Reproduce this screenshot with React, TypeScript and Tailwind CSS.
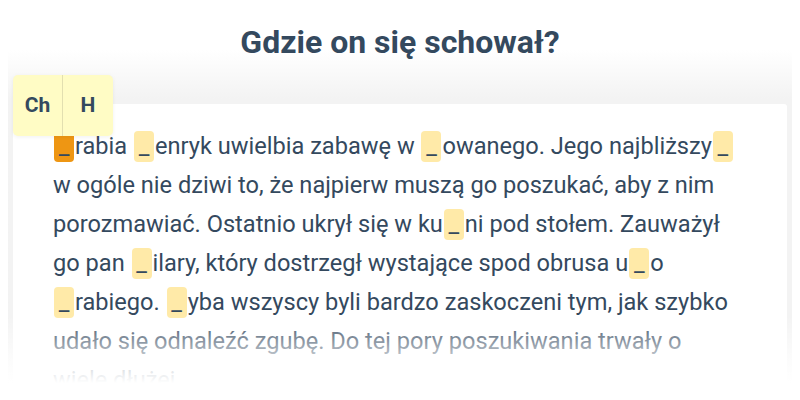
function Blank({ active = false }: { active?: boolean }) {
  return (
    <span
      className={`mx-px inline-block h-[31px] w-[20px] rounded-[4px] text-center leading-[31px] ${
        active ? 'bg-[#ee9613]' : 'bg-[#ffeaa8]'
      }`}
    >
      _
    </span>
  );
}

// keeps a gap glued to the rest of its word so they wrap together
function W({ children }: { children: React.ReactNode }) {
  return <span className="whitespace-nowrap">{children}</span>;
}

export default function App() {
  return (
    <div className="relative h-[400px] w-[800px] overflow-hidden bg-white font-['Roboto',sans-serif] text-[#34495e]">
      <h1 className="relative z-10 h-[50px] pt-[22px] text-center text-[32px] font-bold leading-[40px]">
        Gdzie on się schował?
      </h1>

      <div className="relative mx-[8px] h-[350px] bg-gradient-to-b from-white from-0% to-[#f3f3f3] to-[14%] px-[5px] pt-[54px]">
        <div className="h-full rounded-[3px] bg-white pl-[40px] pr-[44px] pt-[23px] text-[23.6px] leading-[39px]">
          <p>
            <W><Blank active />rabia</W> <W><Blank />enryk</W> uwielbia zabawę w <W><Blank />owanego.</W> Jego{' '}
            <W>najbliższy<Blank /></W> w ogóle nie dziwi to, że najpierw muszą go poszukać, aby z nim porozmawiać.
            Ostatnio ukrył się w <W>ku<Blank />ni</W> pod stołem. Zauważył go pan <W><Blank />ilary,</W> który
            dostrzegł wystające spod obrusa <W>u<Blank />o</W> <W><Blank />rabiego.</W> <W><Blank />yba</W> wszyscy
            byli bardzo zaskoczeni tym, jak szybko udało się odnaleźć zgubę. Do tej pory poszukiwania trwały o
            <br />
            wiele dłużej.
          </p>
        </div>

        <div className="absolute left-[5px] top-[25px] flex h-[61px] w-[100px] rounded-[5px] bg-[#fffcc5] text-[21px] font-bold shadow-[0_1px_4px_rgba(0,0,0,0.06)]">
          <div className="flex w-[50px] items-center justify-center border-r border-[#e2dfb0]">Ch</div>
          <div className="flex flex-1 items-center justify-center">H</div>
        </div>
      </div>

      <div className="pointer-events-none absolute inset-x-0 bottom-0 h-[85px] bg-gradient-to-b from-white/0 via-white/70 via-50% to-white to-80%" />
    </div>
  );
}
